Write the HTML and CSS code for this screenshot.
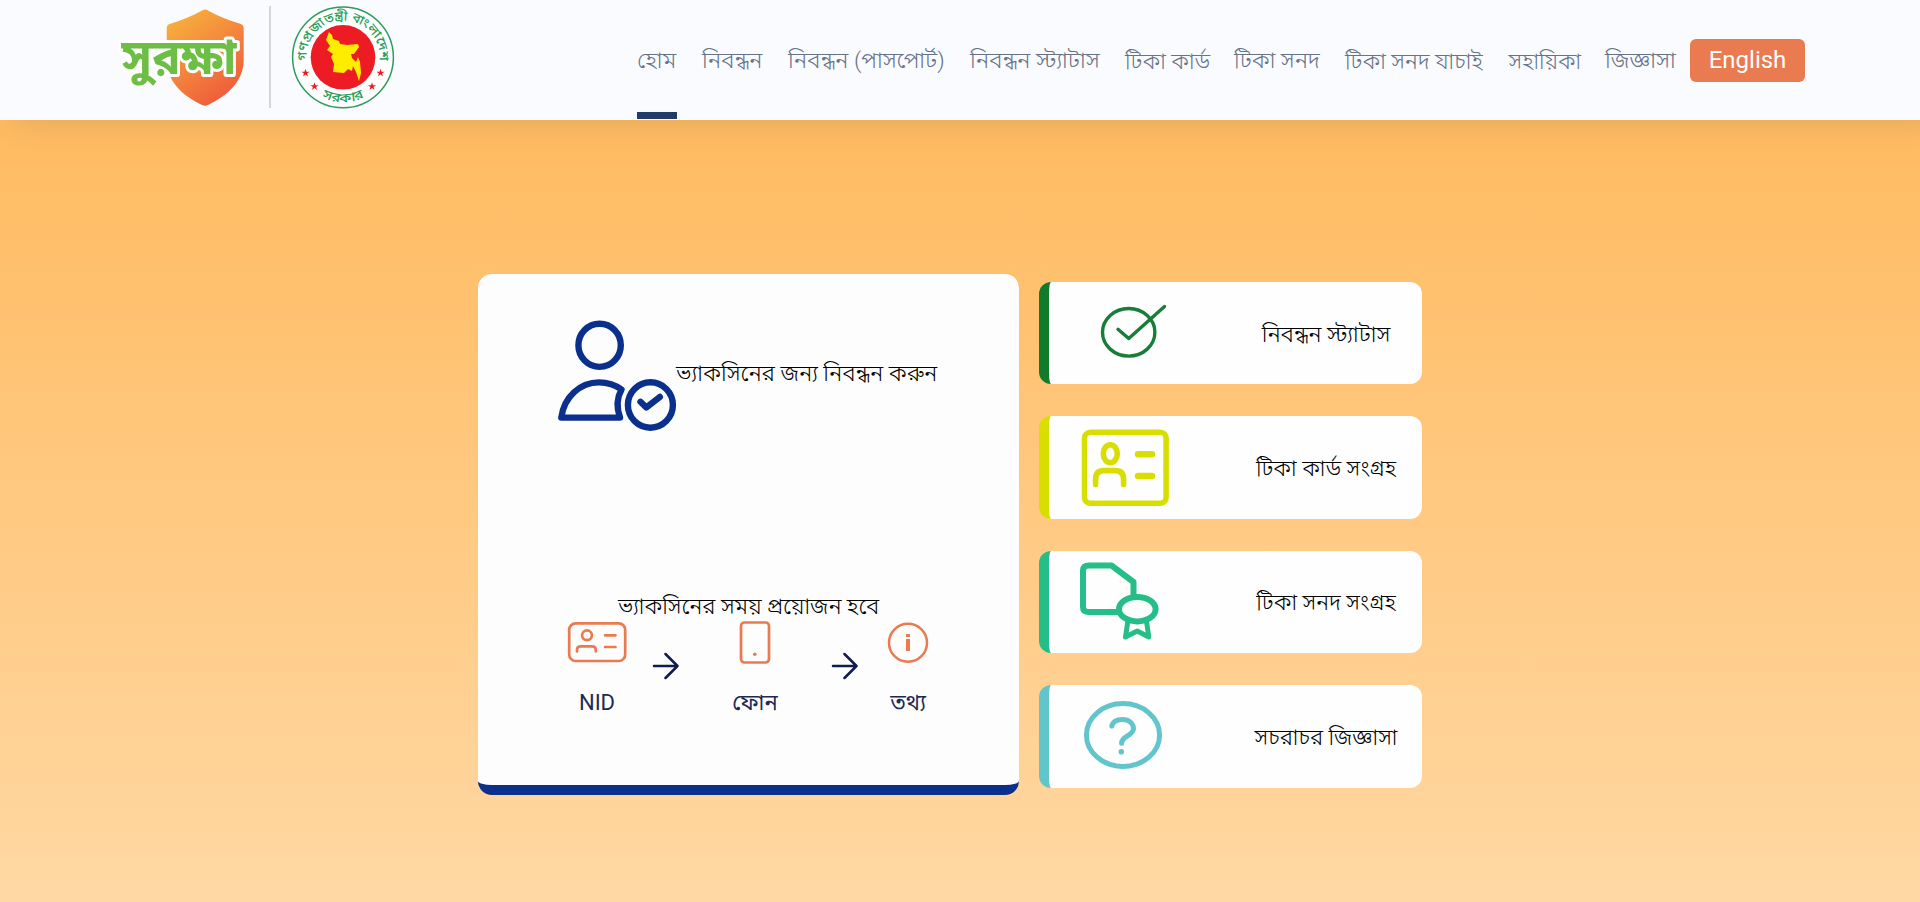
FILE: index.html
```html
<!DOCTYPE html>
<html lang="bn">
<head>
<meta charset="utf-8">
<title>সুরক্ষা</title>
<link rel="stylesheet" href="styles.css">
</head>
<body>
<header class="header">
  <div class="brand">
    <svg class="brand-logo" viewBox="116 0 134 116">
      <defs><linearGradient id="shield" x1="0" y1="0" x2="0.6" y2="1"><stop offset="0" stop-color="#f9b93c"/><stop offset="1" stop-color="#ef5e3c"/></linearGradient></defs>
      <path fill="url(#shield)" d="M166.700 28Q166.700 25 169.500 24C182 20 193 16 202 10.500Q205 8.500 208 10.500C217 16 228 20 241 24Q243.700 25 243.700 28V60C243.700 80 229 95 208 105Q205 106.500 202 105C181 95 166.700 80 166.700 60Z"/>
      <text class="logo-text" x="121.500" y="73.500" textLength="115" lengthAdjust="spacingAndGlyphs">সুরক্ষা</text>
    </svg>
    <span class="brand-divider"></span>
    <svg class="seal" viewBox="291 5 104 104">
      <defs>
        <path id="arcTop" d="M307 63A36.500 36.500 0 1 1 379 63"/>
        <path id="arcBottom" d="M298 57.300A45 45 0 0 0 388 57.300"/>
        <path id="star" d="M0-4.200 1-1.300 4-1.300 1.600.5 2.500 3.400 0 1.600-2.500 3.400-1.600.5-4-1.300-1-1.300Z"/>
      </defs>
      <circle cx="343" cy="57.300" r="50.400" fill="#fff" stroke="#2a9c5c" stroke-width="1.500"/>
      <circle cx="343" cy="57.300" r="32.300" fill="#ed1c24"/>
      <path fill="#ffed00" d="M329 32 332 35 333 39 339 41 340 44 347 45 358 44 359 47 354 54 351 54 352 58 356 62 358 57 360 62 361 73 359 81 356 72 353 66 352 71 348 69 344 73 333 72 334 64 331 57 333 54 327 50 330 46 326 40Z"/>
      <text class="seal-text"><textPath href="#arcTop" startOffset="50%" text-anchor="middle" textLength="122" lengthAdjust="spacingAndGlyphs">গণপ্রজাতন্ত্রী বাংলাদেশ</textPath></text>
      <text class="seal-text"><textPath href="#arcBottom" startOffset="50%" text-anchor="middle" textLength="44" lengthAdjust="spacingAndGlyphs">সরকার</textPath></text>
      <g fill="#ed1c24"><use href="#star" x="305.500" y="73"/><use href="#star" x="314.500" y="86.500"/><use href="#star" x="372" y="86.500"/><use href="#star" x="380.500" y="73"/></g>
    </svg>
  </div>
  <nav class="nav">
    <a class="nav-link home active">হোম</a>
    <a class="nav-link reg">নিবন্ধন</a>
    <a class="nav-link passport">নিবন্ধন (পাসপোর্ট)</a>
    <a class="nav-link status">নিবন্ধন স্ট্যাটাস</a>
    <a class="nav-link card">টিকা কার্ড</a>
    <a class="nav-link cert">টিকা সনদ</a>
    <a class="nav-link verify">টিকা সনদ যাচাই</a>
    <a class="nav-link guide">সহায়িকা</a>
    <a class="nav-link faq">জিজ্ঞাসা</a>
    <a class="lang">English</a>
  </nav>
</header>
<main class="main">
  <section class="register">
    <div class="register-top">
      <svg class="user-icon" viewBox="556 319 120 114" fill="none" stroke="#0b2f8c" stroke-width="6.400" stroke-linejoin="round" stroke-linecap="round">
        <ellipse cx="599.600" cy="345.300" rx="21.200" ry="21.600"/>
        <path d="M561.300 417.600C564 397 580 382.400 599 382.400Q612 382.600 621.500 389.500Q614.500 402 620 417.600Z"/>
        <ellipse cx="650.400" cy="405" rx="22.500" ry="22.700"/>
        <path d="M640.500 401.800 646.300 407.500 659.800 397"/>
      </svg>
      <span class="register-title">ভ্যাকসিনের জন্য নিবন্ধন করুন</span>
    </div>
    <div class="needs">
      <span class="needs-title">ভ্যাকসিনের সময় প্রয়োজন হবে</span>
      <div class="steps">
        <div class="step step-id">
          <svg width="60" height="44" viewBox="567 621 60 44" fill="none" stroke="#ea7a50" stroke-width="2.700" stroke-linecap="round"><rect x="569.200" y="623.400" width="56" height="37.600" rx="6.500"/><circle cx="587" cy="635.300" r="4.900"/><path d="M577 651.500V650Q577 646.300 581 646.300H592Q595.800 646.300 595.800 650V651.500M605 635.300H615.500M605 647H615.500"/></svg>
          <span>NID</span>
        </div>
        <svg class="arrow" width="27" height="28" viewBox="0 0 27 28"><path d="M2 14H25.500M13.500 2 25.500 14 13.500 26"/></svg>
        <div class="step step-phone">
          <svg width="34" height="44" viewBox="738.500 621 34 44" fill="none" stroke="#ea7a50" stroke-width="2.700"><rect x="741.500" y="622.500" width="28" height="40" rx="3.500"/><circle cx="755.300" cy="654.300" r="1.800" fill="#ea7a50" stroke="none"/></svg>
          <span>ফোন</span>
        </div>
        <svg class="arrow" width="27" height="28" viewBox="0 0 27 28"><path d="M2 14H25.500M13.500 2 25.500 14 13.500 26"/></svg>
        <div class="step step-info">
          <svg width="42" height="44" viewBox="887 621 42 44" fill="none" stroke="#ea7a50"><circle cx="908" cy="642.700" r="19" stroke-width="2.500"/><path d="M908 639V651M908 634V637" stroke-width="4"/></svg>
          <span>তথ্য</span>
        </div>
      </div>
    </div>
  </section>
  <section class="side">
    <a class="tile tile-status">
      <svg class="tile-icon" viewBox="1049 282 150 103" fill="none" stroke="#177d39" stroke-width="3.400" stroke-linecap="round" stroke-linejoin="round"><ellipse cx="1128.700" cy="332.300" rx="26.200" ry="23.800"/><path d="M1118 329.300 1128.700 338.500 1164.500 306.500"/></svg>
      <span class="tile-label">নিবন্ধন স্ট্যাটাস</span>
    </a>
    <a class="tile tile-card">
      <svg class="tile-icon" viewBox="1049 416 150 103" fill="none" stroke="#d8df00" stroke-width="5.600" stroke-linecap="round"><rect x="1084.500" y="432.200" width="81.600" height="71" rx="6"/><ellipse cx="1110.300" cy="453.700" rx="7" ry="9"/><path d="M1095.600 484.500V479Q1095.600 470.600 1104 470.600H1115Q1123.600 470.600 1123.600 479V484.500"/><path stroke-width="6.400" d="M1138 454.300H1152M1138 476H1152"/></svg>
      <span class="tile-label">টিকা কার্ড সংগ্রহ</span>
    </a>
    <a class="tile tile-cert">
      <svg class="tile-icon" viewBox="1049 550.500 150 103" fill="none" stroke="#26be88" stroke-width="6" stroke-linecap="round" stroke-linejoin="round"><path d="M1133.500 596V582.500L1111.500 566H1089Q1083 566 1083 571V607.500Q1083 612.500 1089 612.500H1117"/><ellipse cx="1137.300" cy="609.700" rx="18.300" ry="12.200"/><path d="M1127.800 622 1125.500 637.500 1137.300 631.500 1148.800 637.500 1146.500 622" stroke-width="5"/></svg>
      <span class="tile-label">টিকা সনদ সংগ্রহ</span>
    </a>
    <a class="tile tile-faq">
      <svg class="tile-icon" viewBox="1049 685 150 103" fill="none" stroke="#62c5cc" stroke-width="5" stroke-linecap="round" stroke-linejoin="round"><ellipse cx="1123" cy="735" rx="36.600" ry="31.400"/><path d="M1111.800 726C1113 721.500 1117.500 719.500 1122.500 719.500C1129 719.500 1133.500 723.500 1133.500 728.500C1133.500 736 1121.600 735.500 1121.600 743.300"/><circle cx="1121.300" cy="751.700" r="2.800" fill="#62c5cc" stroke="none"/></svg>
      <span class="tile-label">সচরাচর জিজ্ঞাসা</span>
    </a>
  </section>
</main>
</body>
</html>
```
FILE: styles.css
```css
* { box-sizing: border-box; }
body {
  margin: 0;
  height: 902px;
  overflow: hidden;
  display: flex;
  flex-direction: column;
  font-family: Roboto, "Noto Sans Bengali", "Noto Sans", sans-serif;
  background: linear-gradient(180deg, #ffb656 0%, #ffd8a3 100%);
}
.header {
  flex: none;
  height: 120px;
  padding: 0 115px 0 116px;
  display: flex;
  justify-content: space-between;
  background: #fafbff;
  box-shadow: 14px 6px 24px rgba(90, 90, 90, .14);
}
.brand { display: flex; }
.brand-logo { width: 134px; height: 116px; }
.brand-divider { width: 2px; height: 102px; margin: 6px 20px 0 19px; background: #d3d6dc; }
.seal { width: 104px; height: 104px; margin-top: 5px; }
.logo-text {
  font-size: 49px;
  font-weight: 700;
  fill: #6dbe45;
  stroke: #fff;
  stroke-width: 6px;
  stroke-linejoin: round;
  paint-order: stroke;
}
.seal-text { font-size: 13px; font-weight: 500; fill: #2a9c5c; }
.nav { display: flex; align-items: flex-start; }
.nav-link {
  height: 119px;
  margin-right: 25px;
  line-height: 122px;
  font-size: 22.900px;
  font-weight: 330;
  color: #667286;
  white-space: nowrap;
}
.home { width: 40px; }
.reg { width: 61px; }
.passport { width: 157px; }
.status { width: 130px; }
.card { width: 84px; font-size: 22.300px; }
.cert { width: 86px; font-size: 22.600px; }
.verify { width: 138.500px; font-size: 22.300px; }
.guide { width: 71.500px; font-size: 22.100px; }
.faq { width: 72px; margin-right: 13px; font-size: 22.900px; }
.active { border-bottom: 7px solid #233b67; }
.lang {
  width: 115px;
  height: 43px;
  margin-top: 39px;
  border-radius: 6px;
  background: #ea7a50;
  color: #fff;
  font-size: 24px;
  line-height: 43px;
  text-align: center;
}
.main { display: flex; padding: 154px 0 0 478px; gap: 20px; }
.register {
  width: 541px;
  height: 521px;
  border-radius: 14px;
  border-bottom: 10px solid #0b2f8c;
  background: #fdfdfd;
  color: #000;
}
.register-top { display: flex; padding: 45px 0 0 78px; height: 314px; }
.user-icon { width: 120px; height: 114px; overflow: visible; }
.register-title { width: 263px; line-height: 110px; font-size: 22.700px; font-weight: 330; white-space: nowrap; }
.needs-title { display: block; height: 33px; line-height: 36px; font-size: 22.400px; font-weight: 330; text-align: center; white-space: nowrap; }
.steps { display: flex; padding-left: 89px; color: #1d2955; font-size: 22px; }
.step { display: flex; flex-direction: column; align-items: center; gap: 22px; line-height: 32px; white-space: nowrap; }
.step-id { width: 60px; }
.step-phone { width: 80px; margin: 0 36px 0 36px; }
.step-phone + .arrow { margin-left: 0; }
.step-info { width: 60px; margin-left: 20px; }
.step svg { flex: none; }
.arrow { margin: 31px 0 0 25px; fill: none; stroke: #0f1c4d; stroke-width: 2.5; stroke-linecap: round; stroke-linejoin: round; }
.side { display: flex; flex-direction: column; gap: 32px; padding-top: 8px; }
.tile {
  width: 383px;
  height: 102.400px;
  display: flex;
  align-items: center;
  border-left: 10px solid;
  border-radius: 12px;
  background: #fefefe;
}
.tile-icon { flex: none; width: 150px; height: 103px; }
.tile-label { flex: 1; margin: 5px 0 0 31px; text-align: center; font-size: 22.300px; font-weight: 330; color: #000; white-space: nowrap; }
.tile-status { border-color: #107c2b; }
.tile-status .tile-label { font-size: 22.700px; }
.tile-card { border-color: #d8df00; }
.tile-cert { border-color: #26be88; }
.tile-faq { border-color: #62c5cc; }
```
